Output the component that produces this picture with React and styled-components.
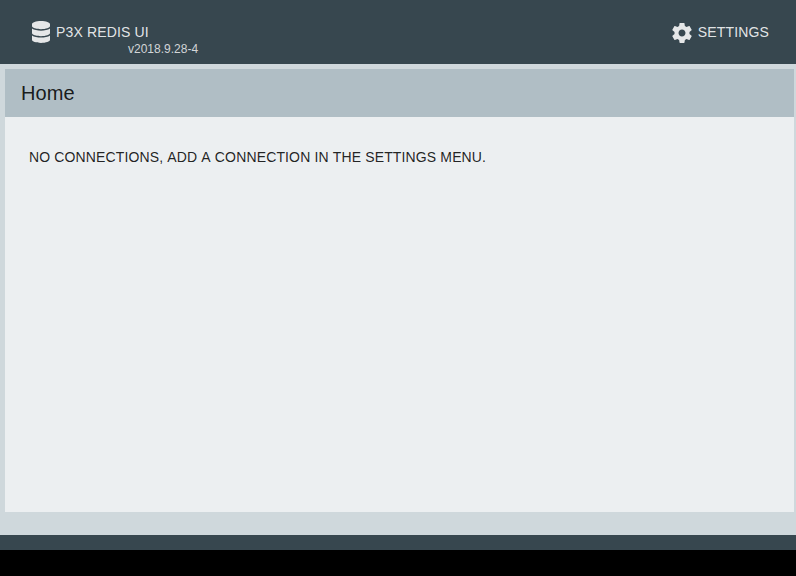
import React from "react";
import styled, { createGlobalStyle } from "styled-components";
import { FaDatabase } from "react-icons/fa";

const GlobalStyle = createGlobalStyle`
  * { box-sizing: border-box; }
  body {
    margin: 0;
    background: #000;
    font-family: "Liberation Sans", Arial, sans-serif;
    letter-spacing: 0.14px;
  }
`;

const Page = styled.div`
  display: flex;
  flex-direction: column;
  height: 550px;
  background: #cfd8dc;
`;

const Toolbar = styled.header`
  display: flex;
  justify-content: space-between;
  height: 64px;
  padding: 0 27px 0 32px;
  background: #37474f;
  color: rgba(255, 255, 255, 0.87);
`;

const Brand = styled.div`
  position: relative;
  display: flex;
  height: 64px;
`;

const Label = styled.span`
  margin-top: 23px;
  font-size: 14px;
  line-height: 18px;
  white-space: nowrap;
`;

const Version = styled.span`
  position: absolute;
  top: 42px;
  left: 96px;
  color: rgba(255, 255, 255, 0.78);
  font-size: 12px;
  line-height: 14px;
  letter-spacing: 0;
  white-space: nowrap;
`;

const DatabaseIcon = styled(FaDatabase)`
  width: 18px;
  height: 22px;
  margin: 21px 6px 0 0;
`;

const SettingsButton = styled.button`
  display: flex;
  padding: 0;
  border: 0;
  background: none;
  color: inherit;
  font: inherit;
  letter-spacing: inherit;
`;

const GearIcon = styled.svg`
  width: 24px;
  height: 24px;
  margin: 21px 4px 0 0;
  fill: currentColor;
`;

const Panel = styled.main`
  flex: 1;
  display: flex;
  flex-direction: column;
  margin: 5px 2px 23px 5px;
  background: #eceff1;
  color: rgba(0, 0, 0, 0.87);
`;

const PanelHeader = styled.h1`
  height: 48px;
  margin: 0;
  padding: 0 16px;
  background: #b0bec5;
  font-size: 20px;
  font-weight: 400;
  line-height: 48px;
  letter-spacing: 0.1px;
`;

const Message = styled.p`
  margin: 0;
  padding: 31px 24px;
  font-size: 14px;
  line-height: 18px;
  letter-spacing: 0.14px;
  font-kerning: none;
`;

const Footer = styled.footer`
  height: 15px;
  background: #37474f;
`;

export default function App() {
  return (
    <>
      <GlobalStyle />
      <Page>
        <Toolbar>
          <Brand>
            <DatabaseIcon preserveAspectRatio="none" />
            <Label>P3X REDIS UI</Label>
            <Version>v2018.9.28-4</Version>
          </Brand>
          <SettingsButton>
            <GearIcon viewBox="0 0 24 24" aria-hidden="true">
              <path d="M19.43 12.98c.04-.32.07-.64.07-.98s-.03-.66-.07-.98l2.11-1.65c.19-.15.24-.42.12-.64l-2-3.46c-.12-.22-.39-.3-.61-.22l-2.49 1c-.52-.4-1.08-.73-1.69-.98l-.38-2.65C14.46 2.18 14.25 2 14 2h-4c-.25 0-.46.18-.49.42l-.38 2.65c-.61.25-1.17.59-1.69.98l-2.49-1c-.23-.09-.49 0-.61.22l-2 3.46c-.13.22-.07.49.12.64l2.11 1.65c-.04.32-.07.65-.07.98s.03.66.07.98l-2.11 1.65c-.19.15-.24.42-.12.64l2 3.46c.12.22.39.3.61.22l2.49-1c.52.4 1.08.73 1.69.98l.38 2.65c.03.24.24.42.49.42h4c.25 0 .46-.18.49-.42l.38-2.65c.61-.25 1.17-.59 1.69-.98l2.49 1c.23.09.49 0 .61-.22l2-3.46c.12-.22.07-.49-.12-.64l-2.11-1.65zM12 15.5c-1.93 0-3.5-1.57-3.5-3.5s1.57-3.5 3.5-3.5 3.5 1.57 3.5 3.5-1.57 3.5-3.5 3.5z" />
            </GearIcon>
            <Label>SETTINGS</Label>
          </SettingsButton>
        </Toolbar>
        <Panel>
          <PanelHeader>Home</PanelHeader>
          <Message>NO CONNECTIONS, ADD A CONNECTION IN THE SETTINGS MENU.</Message>
        </Panel>
        <Footer />
      </Page>
    </>
  );
}
